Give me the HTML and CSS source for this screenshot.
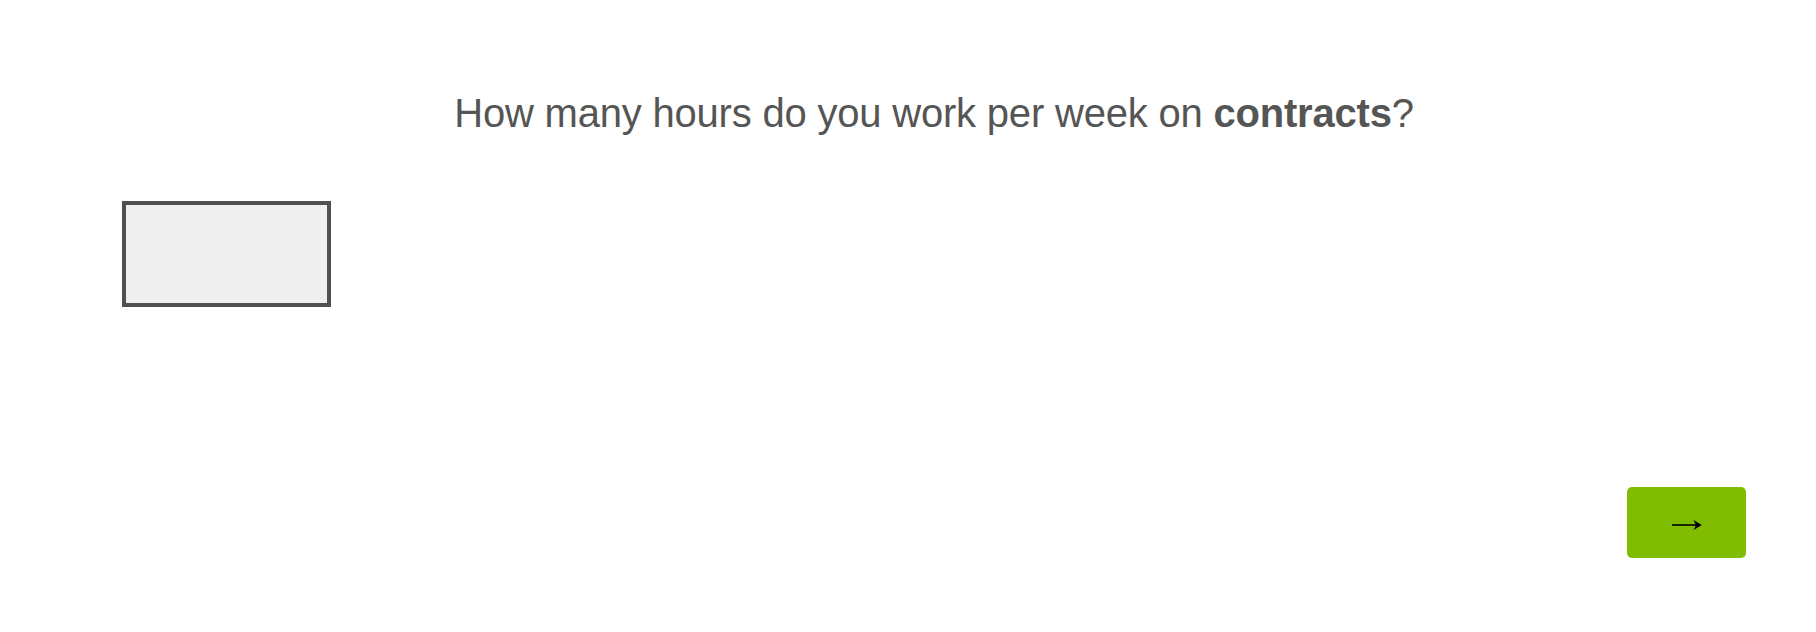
FILE: index.html
```html
<!DOCTYPE html>
<html lang="en">
<head>
    <meta charset="UTF-8">
    <meta name="viewport" content="width=device-width, initial-scale=1.0">
    <title>Hours per week</title>
    <link rel="stylesheet" href="styles.css">
</head>
<body>
    <div class="quiz">
        <h1 class="question">How many hours do you work per week on <strong>contracts</strong>?</h1>

        <div class="answer">
            <input type="text" class="hours-input" id="hours">
        </div>

        <div class="actions">
            <button class="next-btn" type="button" aria-label="Next">
                <svg class="next-arrow" width="30" height="12" viewBox="0 0 30 12">
                    <line x1="0" y1="6" x2="25" y2="6" stroke="#000" stroke-width="1.6"/>
                    <path d="M29.8 6 L21.5 1 L24 6 L21.5 11 Z" fill="#000"/>
                </svg>
            </button>
        </div>
    </div>
</body>
</html>
```

FILE: styles.css
```css
body {
    margin: 0;
    padding: 0;
    background-color: #ffffff;
    font-family: "Liberation Sans", Arial, sans-serif;
    color: #555555;
}

.quiz {
    padding: 89px 70px 0 122px;
}

.question {
    margin: 0;
    text-align: center;
    font-size: 40px;
    line-height: 48px;
    font-weight: normal;
    letter-spacing: -0.2px;
    color: #555555;
}

.question strong {
    font-weight: bold;
}

.answer {
    margin-top: 64px;
}

.hours-input {
    display: block;
    box-sizing: border-box;
    width: 209px;
    height: 106px;
    margin: 0;
    border: 4px solid #505050;
    background-color: #efefef;
    font-family: inherit;
    font-size: 40px;
    color: #555555;
    padding: 0 12px;
    outline: none;
}

.actions {
    display: flex;
    justify-content: flex-end;
    margin-top: 180px;
}

.next-btn {
    display: flex;
    align-items: center;
    justify-content: center;
    box-sizing: border-box;
    width: 119px;
    height: 71px;
    border: none;
    border-radius: 5px;
    background-color: #80bc00;
    padding: 5px 0 0 1px;
    cursor: pointer;
}

.next-arrow {
    display: block;
}
```
